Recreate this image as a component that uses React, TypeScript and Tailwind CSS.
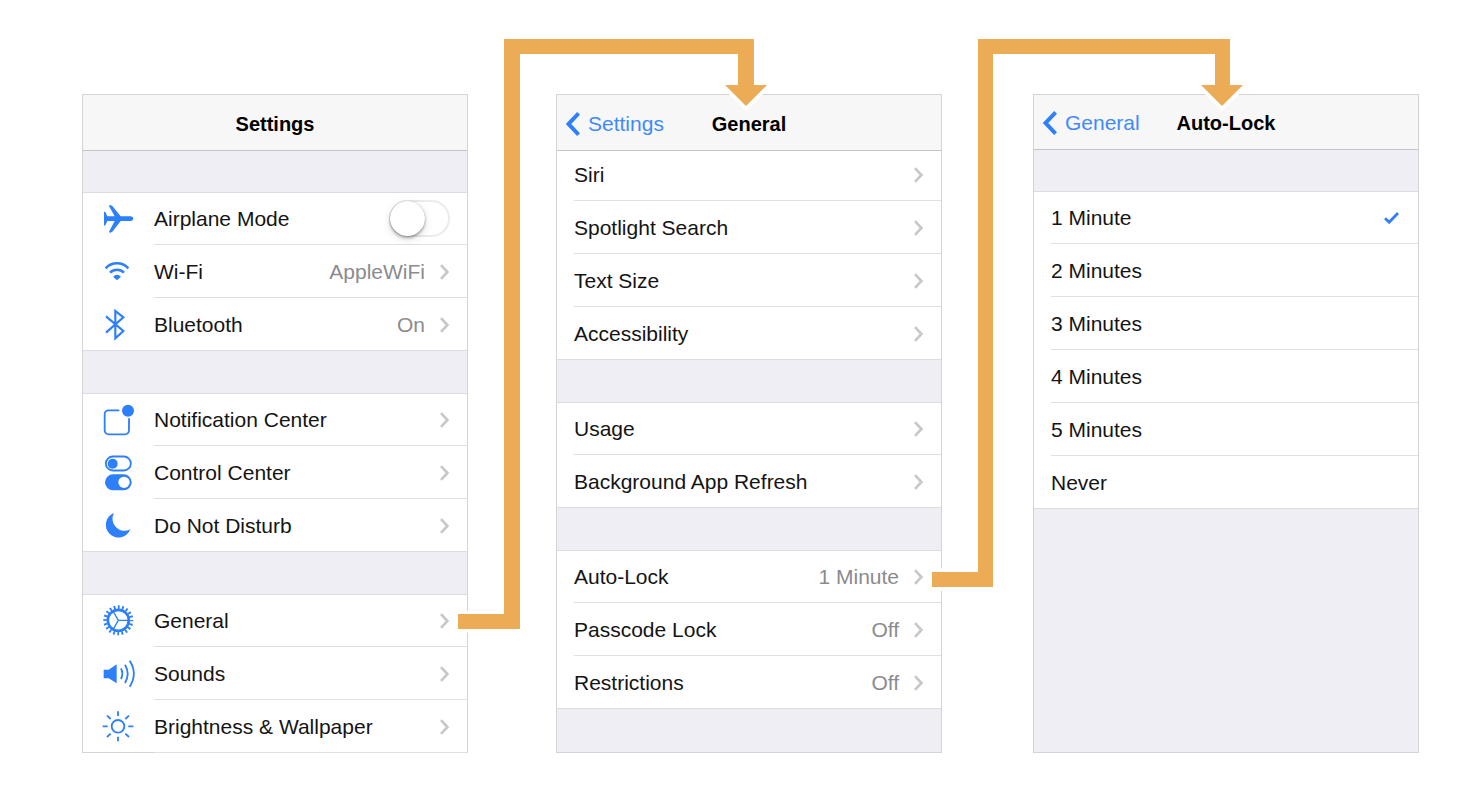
import type { ReactNode } from "react";

function Icon({ children }: { children: ReactNode }) {
  return (
    <svg viewBox="0 0 96 96" className="h-8 w-8 shrink-0 overflow-visible text-[#2d7ffa]" fill="none" stroke="currentColor" strokeWidth="5.5" aria-hidden="true">
      {children}
    </svg>
  );
}

const airplane = (
  <Icon>
    <path fill="currentColor" stroke="none" d="M6 26L10 27L16 40H38L21 9Q21 6 25 6L31 9L56 40H86Q94 41 94 47Q94 53 86 54H56L31 86L25 89Q21 89 21 86L38 54H16L10 67L6 68Z" />
  </Icon>
);

const wifi = (
  <Icon>
    <path strokeWidth="7.5" d="M11 37A46 46 0 0 1 79 37M24 50A30 30 0 0 1 66 50" />
    <path fill="currentColor" stroke="none" d="M33 62Q45 50 57 62L45 73Z" />
  </Icon>
);

const bluetooth = (
  <Icon>
    <path strokeWidth="6.5" d="M12 71L64 25L40 6V88L64 66L12 22" />
  </Icon>
);

const notification = (
  <Icon>
    <path d="M52 19H20A12 12 0 0 0 8 31V79A12 12 0 0 0 20 91H69A12 12 0 0 0 81 79V43" />
    <circle cx="78" cy="20" r="18" fill="currentColor" stroke="none" />
  </Icon>
);

const control = (
  <Icon>
    <rect x="11.5" y="-1.5" width="75" height="42" rx="21" />
    <circle cx="32" cy="20" r="15" fill="currentColor" stroke="none" />
    <rect x="9" y="52" width="80" height="48" rx="24" fill="currentColor" stroke="none" />
    <circle cx="66" cy="76" r="17" fill="#fff" stroke="none" />
  </Icon>
);

const moon = (
  <Icon>
    <path fill="currentColor" stroke="none" d="M36 9A38 38 0 1 0 85 58A36 36 0 0 1 36 9Z" />
  </Icon>
);

const gear = (
  <Icon>
    <circle cx="49" cy="46" r="31.5" strokeWidth="8" />
    <circle cx="49" cy="46" r="39.5" strokeWidth="11" strokeDasharray="5.4 7.01" strokeDashoffset="2.7" />
    <path strokeWidth="4" d="M49 46H80M49 46L33 18M49 46L33 74" />
  </Icon>
);

const sound = (
  <Icon>
    <path fill="currentColor" stroke="none" d="M5 35H20L44 19V76L20 61H5Z" />
    <path d="M57 31Q65 47 57 63M69 20Q85 47 69 75M83 8Q108 47 83 86" />
  </Icon>
);

const sun = (
  <Icon>
    <circle cx="48" cy="46" r="19" />
    <path d="M48 15V1M48 77V91M17 46H2M79 46H94M26 24L15 14M70 24L81 14M26 68L15 78M70 68L81 78" />
  </Icon>
);

function Chevron() {
  return (
    <svg viewBox="0 0 9 16" className="h-4 w-[9px] shrink-0" fill="none" stroke="#c7c7cc" strokeWidth="2.6" aria-hidden="true">
      <path d="M1 1.2L7.4 8L1 14.8" />
    </svg>
  );
}

function Screen({ children }: { children: ReactNode }) {
  return <section className="flex flex-col border border-[#d4d4d6] bg-white">{children}</section>;
}

function Header({ title, back, height = "h-14" }: { title: string; back?: string; height?: string }) {
  return (
    <header className={`relative z-10 grid grid-cols-[1fr_auto_1fr] items-center border-b border-[#c4c4c6] bg-[#f7f7f7] px-[9px] pt-0.5 ${height}`}>
      <div>
        {back && (
          <a href="#back" className="flex items-center gap-2 text-[21px] leading-6 text-[#3f8afb]">
            <svg viewBox="0 0 14 24" className="h-6 w-3.5" fill="none" stroke="#2d7ffa" strokeWidth="4" aria-hidden="true">
              <path d="M12.6 1.4L2.6 12L12.6 22.6" />
            </svg>
            {back}
          </a>
        )}
      </div>
      <h2 className="text-xl leading-6 font-bold text-black">{title}</h2>
    </header>
  );
}

function Gap({ size = "h-11" }: { size?: string }) {
  return <div className={`relative -my-px shrink-0 border-y border-[#dcdce0] bg-[#efeef4] ${size}`} />;
}

function Filler() {
  return <div className="relative -mt-px grow border-t border-[#dcdce0] bg-[#efeef4]" />;
}

function Row({ label, icon, value }: { label: string; icon?: ReactNode; value?: string }) {
  return (
    <li>
      <a href="#open" className={`flex h-[53px] items-center gap-5 ${icon ? "pl-[19px]" : "pl-[17px]"}`}>
        {icon}
        <span className="flex h-full grow items-center justify-between border-b border-[#e0e0e2] pt-0.5 pr-[18px]">
          <span>{label}</span>
          <span className="flex items-center gap-[15px] text-[#8b8b8d]">
            {value}
            <Chevron />
          </span>
        </span>
      </a>
    </li>
  );
}

function SwitchRow({ label, icon }: { label: string; icon: ReactNode }) {
  return (
    <li>
      <label className="flex h-[53px] items-center gap-5 pl-[19px]">
        {icon}
        <span className="flex h-full grow items-center justify-between border-b border-[#e0e0e2] pr-[17px]">
          <span className="pt-0.5">{label}</span>
          <input
            type="checkbox"
            role="switch"
            className="h-[37px] w-[61px] appearance-none rounded-full border-2 border-[#ebebeb] bg-white before:-mt-px before:-ml-px before:block before:h-[35px] before:w-[35px] before:rounded-full before:bg-white before:shadow-[0_2px_3px_rgba(0,0,0,0.3),0_3px_10px_rgba(0,0,0,0.12),0_0_1px_rgba(0,0,0,0.3)]"
          />
        </span>
      </label>
    </li>
  );
}

function Option({ label, checked = false }: { label: string; checked?: boolean }) {
  return (
    <li>
      <label className="flex h-[53px] pl-[17px]">
        <span className="flex h-full grow items-center justify-between border-b border-[#e0e0e2] pt-0.5 pr-[19px]">
          <span>{label}</span>
          <input type="radio" name="auto-lock" defaultChecked={checked} className="peer h-0 w-0 appearance-none" />
          <svg viewBox="0 0 15 12" className="hidden h-3 w-[15px] peer-checked:block" fill="none" stroke="#2d7ffa" strokeWidth="2.8" aria-hidden="true">
            <path d="M1 6.2L5.2 10.2L14 1" />
          </svg>
        </span>
      </label>
    </li>
  );
}

function Connector({ d, box }: { d: string; box: string }) {
  return (
    <div className="relative z-20">
      <svg className={`pointer-events-none absolute -top-[60px] overflow-visible ${box}`} aria-hidden="true">
        <path d={d} fill="#ecac55" stroke="#fff" strokeWidth="7" paintOrder="stroke" />
      </svg>
    </div>
  );
}

const durations = ["2 Minutes", "3 Minutes", "4 Minutes", "5 Minutes", "Never"];

export default function App() {
  return (
    <main className="min-h-screen bg-white pt-[94px] pr-[49px] pb-[39px] pl-[82px] font-['Liberation_Sans',Arial,sans-serif] text-[21px] leading-6 text-[#141414]">
      <div className="grid grid-cols-[1fr_88px_1fr_91px_1fr]">
        <Screen>
          <Header title="Settings" />
          <Gap size="h-[43px]" />
          <ul>
            <SwitchRow icon={airplane} label="Airplane Mode" />
            <Row icon={wifi} label="Wi-Fi" value="AppleWiFi" />
            <Row icon={bluetooth} label="Bluetooth" value="On" />
          </ul>
          <Gap />
          <ul>
            <Row icon={notification} label="Notification Center" />
            <Row icon={control} label="Control Center" />
            <Row icon={moon} label="Do Not Disturb" />
          </ul>
          <Gap />
          <ul className="-mb-px">
            <Row icon={gear} label="General" />
            <Row icon={sound} label="Sounds" />
            <Row icon={sun} label="Brightness & Wallpaper" />
          </ul>
        </Screen>

        <Connector box="-left-[20px] h-[600px] w-[330px]" d="M10 580H56V5H306V51H319L298 72L277 51H290V20H72V595H10Z" />

        <Screen>
          <Header title="General" back="Settings" />
          <ul className="-mt-[3px]">
            <Row label="Siri" />
            <Row label="Spotlight Search" />
            <Row label="Text Size" />
            <Row label="Accessibility" />
          </ul>
          <Gap />
          <ul>
            <Row label="Usage" />
            <Row label="Background App Refresh" />
          </ul>
          <Gap />
          <ul>
            <Row label="Auto-Lock" value="1 Minute" />
            <Row label="Passcode Lock" value="Off" />
            <Row label="Restrictions" value="Off" />
          </ul>
          <Filler />
        </Screen>

        <Connector box="-left-[20px] h-[560px] w-[330px]" d="M10 538H56V5H308V51H321L300 72L279 51H293V20H71V553H10Z" />

        <Screen>
          <Header title="Auto-Lock" back="General" height="h-[55px]" />
          <Gap size="h-[43px]" />
          <ul>
            <Option label="1 Minute" checked />
            {durations.map((duration) => (
              <Option key={duration} label={duration} />
            ))}
          </ul>
          <Filler />
        </Screen>
      </div>
    </main>
  );
}
